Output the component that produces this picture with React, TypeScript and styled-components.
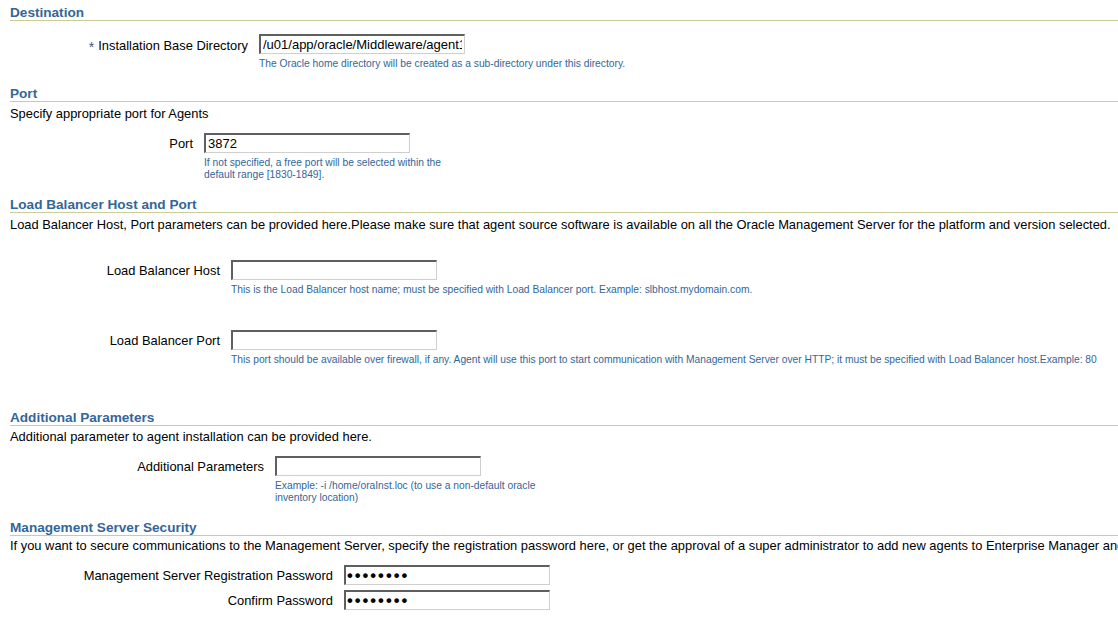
import React from 'react'
import styled, { createGlobalStyle } from 'styled-components'

const GlobalStyle = createGlobalStyle`
	html, body {
		margin: 0;
		padding: 0;
		background: #ffffff;
	}
	body {
		font-family: 'Liberation Sans', Arial, sans-serif;
		font-size: 13px;
		color: #000000;
	}
`

const Page = styled.div`
	width: 1118px;
	height: 627px;
	overflow: hidden;
	padding-left: 10px;
	box-sizing: border-box;
`

const SectionHeader = styled.div<{ $mt: number }>`
	margin-top: ${(p) => p.$mt}px;
	margin-right: -20px;
	height: 16px;
	line-height: 18px;
	font-size: 13.6px;
	font-weight: bold;
	color: #336699;
	border-bottom: 1px solid #cccc99;
	white-space: nowrap;
`

const Description = styled.div<{ $mt: number }>`
	margin-top: ${(p) => p.$mt}px;
	height: 16px;
	line-height: 18px;
	font-size: 12.9px;
	white-space: nowrap;
`

const FieldRow = styled.div<{ $labelWidth: number; $mt: number }>`
	display: grid;
	grid-template-columns: ${(p) => p.$labelWidth}px auto;
	column-gap: 11px;
	margin-top: ${(p) => p.$mt}px;
	align-items: start;
`

const Label = styled.label`
	height: 20px;
	line-height: 22px;
	text-align: right;
	white-space: nowrap;
	font-size: 12.9px;
`

const Required = styled.span`
	color: #3a5a80;
	font-size: 14px;
	margin-right: 4px;
	position: relative;
	top: 2px;
`

const FieldCell = styled.div`
	display: flex;
	flex-direction: column;
`

const TextInput = styled.input`
	width: 206px;
	height: 20px;
	box-sizing: border-box;
	padding: 0 2px;
	border-style: solid;
	border-width: 2px 1px 1px 2px;
	border-color: #5f5f5f #cfcfcf #cfcfcf #5f5f5f;
	font-family: 'Liberation Sans', Arial, sans-serif;
	font-size: 13px;
	color: #000;
	background: #fff;
	outline: none;
	caret-color: #000;

	&[type='password'] {
		font-size: 16.5px;
		font-weight: bold;
		letter-spacing: 2px;
		padding-left: 1px;
	}
`

const HelpText = styled.div<{ $wrap?: number }>`
	margin-top: 4px;
	font-size: 10.25px;
	line-height: 12px;
	color: #336699;
	${(p) => (p.$wrap ? `width: ${p.$wrap}px;` : 'white-space: nowrap;')}
`

type FieldProps = {
	label: string
	labelWidth: number
	mt: number
	value?: string
	type?: string
	required?: boolean
	help?: string
	helpWrap?: number
	focus?: boolean
}

function Field({ label, labelWidth, mt, value = '', type = 'text', required, help, helpWrap, focus }: FieldProps) {
	return (
		<FieldRow $labelWidth={labelWidth} $mt={mt}>
			<Label>
				{required && <Required>*</Required>}
				{label}
			</Label>
			<FieldCell>
				<TextInput type={type} defaultValue={value} autoFocus={focus} />
				{help && <HelpText $wrap={helpWrap}>{help}</HelpText>}
			</FieldCell>
		</FieldRow>
	)
}

export default function App() {
	return (
		<>
			<GlobalStyle />
			<Page>
				<SectionHeader $mt={4}>Destination</SectionHeader>
				<Field
					label="Installation Base Directory"
					required
					labelWidth={238}
					mt={13}
					value="/u01/app/oracle/Middleware/agent12c"
					help="The Oracle home directory will be created as a sub-directory under this directory."
				/>

				<SectionHeader $mt={15}>Port</SectionHeader>
				<Description $mt={3}>Specify appropriate port for Agents</Description>
				<Field
					label="Port"
					labelWidth={183}
					mt={12}
					value="3872"
					help="If not specified, a free port will be selected within the default range [1830-1849]."
					helpWrap={245}
				/>

				<SectionHeader $mt={15}>Load Balancer Host and Port</SectionHeader>
				<Description $mt={3}>
					Load Balancer Host, Port parameters can be provided here.Please make sure that agent source software is available on all the Oracle Management Server for the platform and version selected.
				</Description>
				<Field
					label="Load Balancer Host"
					labelWidth={210}
					mt={28}
					help="This is the Load Balancer host name; must be specified with Load Balancer port. Example: slbhost.mydomain.com."
				/>
				<Field
					label="Load Balancer Port"
					labelWidth={210}
					mt={34}
					help="This port should be available over firewall, if any. Agent will use this port to start communication with Management Server over HTTP; it must be specified with Load Balancer host.Example: 80"
				/>

				<SectionHeader $mt={43}>Additional Parameters</SectionHeader>
				<Description $mt={2}>Additional parameter to agent installation can be provided here.</Description>
				<Field
					label="Additional Parameters"
					labelWidth={254}
					mt={12}
					help="Example: -i /home/oraInst.loc (to use a non-default oracle inventory location)"
					helpWrap={270}
				/>

				<SectionHeader $mt={15}>Management Server Security</SectionHeader>
				<Description $mt={1}>
					If you want to secure communications to the Management Server, specify the registration password here, or get the approval of a super administrator to add new agents to Enterprise Manager and then the agents will be secured.
				</Description>
				<Field
					label="Management Server Registration Password"
					labelWidth={323}
					mt={12}
					type="password"
					value="welcome1"
				/>
				<Field
					label="Confirm Password"
					labelWidth={323}
					mt={5}
					type="password"
					value="welcome1"
					focus
				/>
			</Page>
		</>
	)
}
